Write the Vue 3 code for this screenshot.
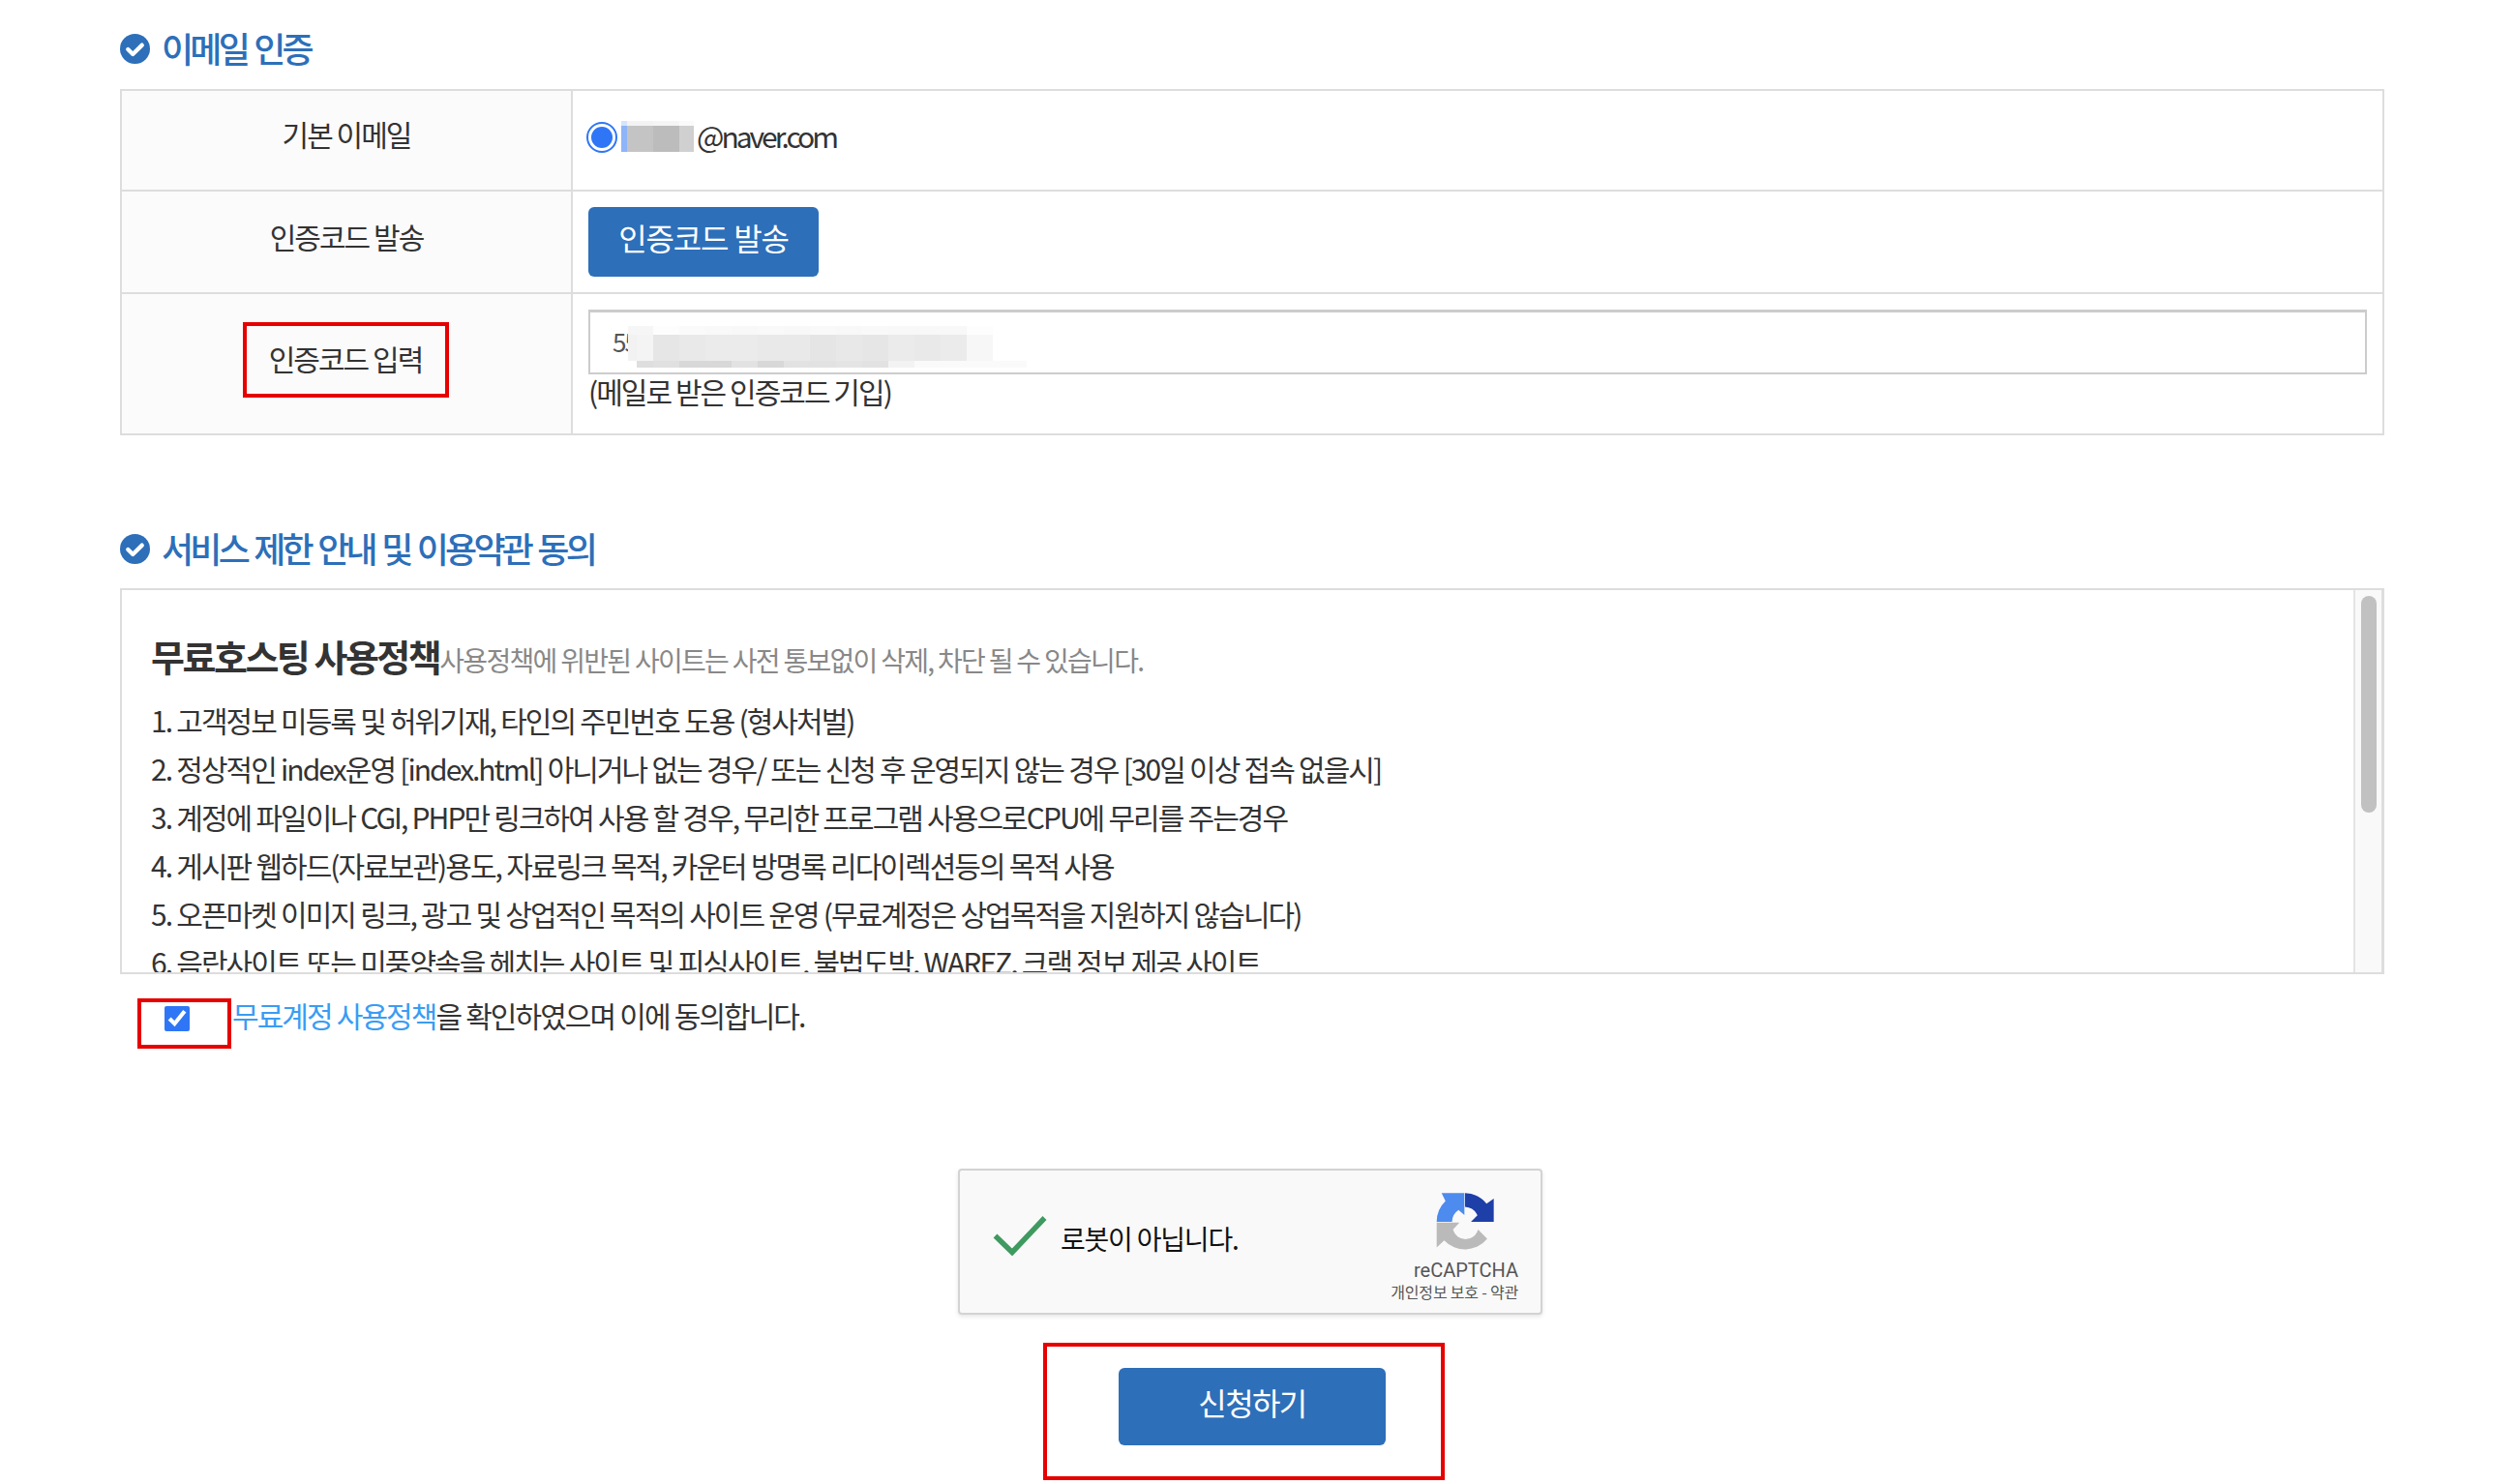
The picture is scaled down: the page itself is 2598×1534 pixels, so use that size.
<script setup>
const emailTop = ['#d6e4fb', '#f3f3f3', '#f5f5f5', '#fafafa']
const emailBlur = [
  { w: 6, c: '#8fb4f7' },
  { w: 27, c: '#c4c4c4' },
  { w: 27, c: '#bcbcbc' },
  { w: 15, c: '#d0d0d0' }
]
const codeTop = [
  { w: 26, c: '#f6f6f6' }, { w: 27, c: '#fdfdfd' }, { w: 27, c: '#fafafa' }, { w: 27, c: '#f9f9f9' },
  { w: 27, c: '#f8f8f8' }, { w: 27, c: '#f9f9f9' }, { w: 27, c: '#f8f8f8' }, { w: 27, c: '#f9f9f9' },
  { w: 27, c: '#f8f8f8' }, { w: 27, c: '#f9f9f9' }, { w: 27, c: '#f8f8f8' }, { w: 27, c: '#f8f8f8' },
  { w: 27, c: '#f8f8f8' }, { w: 27, c: '#fdfdfd' }
]
const codeMid = [
  { w: 9, c: '#f2f2f2' }, { w: 17, c: '#f4f4f4' }, { w: 27, c: '#e6e6e6' }, { w: 27, c: '#e9e9e9' },
  { w: 27, c: '#ebebeb' }, { w: 27, c: '#ebebeb' }, { w: 27, c: '#e9e9e9' }, { w: 27, c: '#e9e9e9' },
  { w: 27, c: '#e5e5e5' }, { w: 27, c: '#e8e8e8' }, { w: 27, c: '#e6e6e6' }, { w: 27, c: '#ebebeb' },
  { w: 27, c: '#e9e9e9' }, { w: 27, c: '#ebebeb' }, { w: 27, c: '#f7f7f7' }
]
const codeLow = [
  { w: 9, c: '#ffffff' }, { w: 17, c: '#dedede' }, { w: 27, c: '#e0e0e0' }, { w: 54, c: '#d8d8d8' },
  { w: 27, c: '#e2e2e2' }, { w: 27, c: '#d8d8d8' }, { w: 54, c: '#e2e2e2' }, { w: 27, c: '#e4e4e4' },
  { w: 27, c: '#e2e2e2' }, { w: 27, c: '#f3f3f3' }, { w: 116, c: '#fafafa' }
]
const policies = [
  '1. 고객정보 미등록 및 허위기재, 타인의 주민번호 도용 (형사처벌)',
  '2. 정상적인 index운영 [index.html] 아니거나 없는 경우/ 또는 신청 후 운영되지 않는 경우 [30일 이상 접속 없을시]',
  '3. 계정에 파일이나 CGI, PHP만 링크하여 사용 할 경우, 무리한 프로그램 사용으로CPU에 무리를 주는경우',
  '4. 게시판 웹하드(자료보관)용도, 자료링크 목적, 카운터 방명록 리다이렉션등의 목적 사용',
  '5. 오픈마켓 이미지 링크, 광고 및 상업적인 목적의 사이트 운영 (무료계정은 상업목적을 지원하지 않습니다)',
  '6. 음란사이트 또는 미풍양속을 헤치는 사이트 및 피싱사이트, 불법도박, WAREZ, 크랙 정보 제공 사이트'
]
</script>

<template>
  <main class="page">
    <h2 class="section-title">
      <svg class="title-icon" viewBox="0 0 32 32" aria-hidden="true">
        <circle cx="16" cy="16" r="16" fill="#2d6fb9" />
        <path d="M8.5 16.5l5.2 5.2L23.5 12" fill="none" stroke="#fff" stroke-width="4.4" stroke-linecap="round" stroke-linejoin="round" />
      </svg>
      이메일 인증
    </h2>

    <div class="table">
      <div class="label label-1">기본 이메일</div>
      <div class="value value-1">
        <span class="radio"><span class="radio-dot"></span></span>
        <span class="email">
          <span class="mosaic email-blur">
            <span class="mosaic-row email-top">
              <span v-for="(c, i) in emailTop" :key="i" :style="{ width: emailBlur[i].w + 'px', background: c }"></span>
            </span>
            <span class="mosaic-row email-main">
              <span v-for="(b, i) in emailBlur" :key="i" :style="{ width: b.w + 'px', background: b.c }"></span>
            </span>
          </span>
          <span class="email-text">@naver.com</span>
        </span>
      </div>

      <div class="label label-2">인증코드 발송</div>
      <div class="value value-2">
        <button class="btn btn-send" type="button">인증코드 발송</button>
      </div>

      <div class="label label-3"><span class="mark-label">인증코드 입력</span></div>
      <div class="value value-3">
        <div class="code-field">
          <input class="code-input" type="text" value="55" readonly />
          <div class="mosaic code-blur">
            <div class="mosaic-row code-top">
              <span v-for="(b, i) in codeTop" :key="i" :style="{ width: b.w + 'px', background: b.c }"></span>
            </div>
            <div class="mosaic-row code-mid">
              <span v-for="(b, i) in codeMid" :key="i" :style="{ width: b.w + 'px', background: b.c }"></span>
            </div>
            <div class="mosaic-row code-low">
              <span v-for="(b, i) in codeLow" :key="i" :style="{ width: b.w + 'px', background: b.c }"></span>
            </div>
          </div>
        </div>
        <p class="hint">(메일로 받은 인증코드 기입)</p>
      </div>
    </div>

    <h2 class="section-title second">
      <svg class="title-icon" viewBox="0 0 32 32" aria-hidden="true">
        <circle cx="16" cy="16" r="16" fill="#2d6fb9" />
        <path d="M8.5 16.5l5.2 5.2L23.5 12" fill="none" stroke="#fff" stroke-width="4.4" stroke-linecap="round" stroke-linejoin="round" />
      </svg>
      서비스 제한 안내 및 이용약관 동의
    </h2>

    <section class="terms">
      <div class="terms-body">
        <div class="terms-head">
          <strong>무료호스팅 사용정책</strong><span>사용정책에 위반된 사이트는 사전 통보없이 삭제, 차단 될 수 있습니다.</span>
        </div>
        <p v-for="line in policies" :key="line" class="policy">{{ line }}</p>
      </div>
      <div class="track"><div class="thumb"></div></div>
    </section>

    <div class="agree">
      <label class="agree-mark"><input class="agree-check" type="checkbox" checked /></label>
      <p class="agree-text"><a class="agree-link">무료계정 사용정책</a>을 확인하였으며 이에 동의합니다.</p>
    </div>

    <div class="captcha">
      <svg class="captcha-check" viewBox="0 0 56 42" aria-hidden="true">
        <path d="M2.5 21.5L20 38.5L53.5 3" fill="none" stroke="#3f9a60" stroke-width="5.5" />
      </svg>
      <span class="captcha-text">로봇이 아닙니다.</span>
      <div class="captcha-brand">
        <svg class="captcha-logo" viewBox="40 34 184 184" aria-hidden="true">
          <path d="M45 126A88 88 0 0 1 72 62L60 38H130V105L112 90A45 45 0 0 0 92 126Z" fill="#4d8bee" />
          <path d="M132 38A88 88 0 0 1 198 70L220 55V126H150L170 106A45 45 0 0 0 132 80Z" fill="#1e3ea8" />
          <path d="M45 128H115L95 150A40 40 0 0 0 172 150L200 178A88 88 0 0 1 68 183L45 205Z" fill="#bababa" />
        </svg>
        <span class="brand-name">reCAPTCHA</span>
        <span class="brand-links">개인정보 보호 - 약관</span>
      </div>
    </div>

    <div class="submit-mark">
      <button class="btn btn-submit" type="button">신청하기</button>
    </div>
  </main>
</template>

<style scoped>
.page {
  box-sizing: border-box;
  width: 2340px;
  height: 1534px;
  margin-left: 124px;
  padding-top: 29px;
  overflow: hidden;
  font-family: "Noto Sans CJK KR", "Noto Sans", sans-serif;
  font-size: 30px;
  letter-spacing: -1.95px;
  color: #333;
}
.section-title {
  display: flex;
  align-items: center;
  gap: 12px;
  height: 40px;
  margin: 0 0 23px;
  font-size: 36px;
  font-weight: 500;
  letter-spacing: -3.8px;
  word-spacing: 3px;
  color: #2d6fb9;
}
.title-icon {
  position: relative;
  top: 1px;
  width: 31px;
  height: 31px;
  flex: none;
}
.section-title.second {
  margin: 96px 0 22px;
}
.table {
  display: grid;
  grid-template-columns: 466px 1fr;
  grid-template-rows: 104px 106px 144px;
  border: 2px solid #ddd;
  box-sizing: border-box;
  height: 358px;
}
.label {
  display: flex;
  justify-content: center;
  box-sizing: border-box;
  background: #fbfbfb;
  border-right: 2px solid #ddd;
  border-bottom: 2px solid #ddd;
  line-height: 40px;
}
.label-1 { padding-top: 24px; }
.label-2 { padding-top: 26px; }
.label-3 { border-bottom: 0; padding-top: 29px; }
.value {
  box-sizing: border-box;
  border-bottom: 2px solid #ddd;
  padding-left: 16px;
}
.value-3 { border-bottom: 0; padding-top: 16px; }
.value-1 {
  display: flex;
  align-items: flex-start;
  padding-left: 14px;
  padding-top: 32px;
}
.value-2 { padding-top: 16px; }
.mark-label {
  display: block;
  box-sizing: border-box;
  width: 213px;
  height: 78px;
  margin-left: -2px;
  border: 4px solid #e60000;
  line-height: 66px;
  text-align: center;
}
.radio {
  flex: none;
  display: flex;
  align-items: center;
  justify-content: center;
  box-sizing: border-box;
  width: 32px;
  height: 32px;
  border: 2px solid #2f76f6;
  border-radius: 50%;
}
.radio-dot {
  width: 22px;
  height: 22px;
  border-radius: 50%;
  background: #2f76f6;
}
.email {
  display: flex;
  align-items: flex-start;
  margin-left: 4px;
  margin-top: -1px;
}
.mosaic-row {
  display: flex;
}
.mosaic-row span {
  display: block;
  height: 100%;
}
.email-blur {
  display: block;
  width: 75px;
  flex: none;
}
.email-top { height: 5px; }
.email-main { height: 27px; }
.email-text {
  margin-left: 3px;
  line-height: 30px;
  letter-spacing: -3px;
}
.btn {
  border: 0;
  padding: 0;
  border-radius: 6px;
  background: #2d6fb9;
  color: #fff;
  font-family: inherit;
}
.btn-send {
  display: block;
  width: 238px;
  height: 72px;
  padding-bottom: 10px;
  font-size: 32px;
  letter-spacing: -1.2px;
}
.code-field {
  position: relative;
  width: 1838px;
  height: 67px;
}
.code-input {
  box-sizing: border-box;
  display: block;
  width: 100%;
  height: 100%;
  padding: 0 23px 4px;
  border: 2px solid #ccc;
  border-top-width: 3px;
  outline: 0;
  font-family: inherit;
  font-size: 26px;
  letter-spacing: -2px;
  color: #555;
}
.code-blur {
  position: absolute;
  left: 41px;
  top: 17px;
}
.code-top { height: 9px; }
.code-mid { height: 27px; }
.code-low { height: 7px; }
.hint {
  margin: 0;
  line-height: 34px;
}
.terms {
  display: flex;
  box-sizing: border-box;
  height: 399px;
  border: 2px solid #ddd;
  border-right-width: 3px;
  overflow: hidden;
}
.terms-body {
  flex: 1;
  min-width: 0;
  padding: 34px 0 0 30px;
  overflow: hidden;
}
.terms-head {
  display: flex;
  align-items: baseline;
  height: 68px;
  margin-bottom: 7px;
  line-height: 68px;
}
.terms-head strong {
  font-size: 38px;
  font-weight: 700;
  letter-spacing: -2.5px;
  color: #333;
}
.terms-head span {
  font-size: 28px;
  letter-spacing: -1.7px;
  color: #888;
}
.policy {
  margin: 0;
  height: 50px;
  line-height: 50px;
  white-space: nowrap;
  word-spacing: 0.4px;
}
.track {
  flex: none;
  box-sizing: border-box;
  width: 29px;
  border-left: 2px solid #e4e4e4;
  background: #f9f9f9;
  padding: 6px 0 0 6px;
}
.thumb {
  width: 16px;
  height: 224px;
  border-radius: 8px;
  background: #c1c1c1;
}
.agree {
  display: flex;
  align-items: flex-start;
  margin: 25px 0 0 18px;
}
.agree-mark {
  display: block;
  box-sizing: border-box;
  flex: none;
  width: 97px;
  height: 52px;
  border: 4px solid #e60000;
  padding: 4px 0 0 24px;
}
.agree-check {
  display: block;
  width: 26px;
  height: 26px;
  margin: 0;
  accent-color: #2f76f6;
}
.agree-text {
  margin: 0 0 0 1px;
  line-height: 34px;
  word-spacing: 0.4px;
}
.agree-link {
  color: #3a9cf3;
}
.captcha {
  display: flex;
  position: relative;
  box-sizing: border-box;
  width: 604px;
  height: 151px;
  margin: 124px 0 0 866px;
  background: #f9f9f9;
  border: 2px solid #d3d3d3;
  border-radius: 4px;
  box-shadow: 0 2px 4px rgba(0, 0, 0, 0.1);
  color: #111;
}
.captcha-check {
  flex: none;
  width: 56px;
  height: 42px;
  margin: 46px 0 0 34px;
}
.captcha-text {
  margin: 49px 0 0 14px;
  font-size: 28px;
  line-height: 42px;
  letter-spacing: -1.2px;
  white-space: nowrap;
}
.captcha-brand {
  position: absolute;
  right: 23px;
  top: 22px;
  display: flex;
  flex-direction: column;
  align-items: flex-end;
  width: 140px;
}
.captcha-logo {
  width: 62px;
  height: 62px;
  margin-right: 24px;
}
.brand-name {
  margin-top: 6px;
  font-family: Roboto, "Noto Sans", sans-serif;
  font-size: 20px;
  line-height: 26px;
  letter-spacing: 0;
  color: #555;
}
.brand-links {
  margin-top: -2px;
  font-size: 16px;
  line-height: 22px;
  letter-spacing: -0.2px;
  color: #555;
  white-space: nowrap;
}
.submit-mark {
  box-sizing: border-box;
  width: 415px;
  height: 142px;
  margin: 29px 0 0 954px;
  border: 4px solid #e60000;
  padding: 22px 0 0 74px;
}
.btn-submit {
  display: block;
  width: 276px;
  height: 80px;
  padding-bottom: 10px;
  font-size: 32px;
  letter-spacing: -1.6px;
}
</style>
